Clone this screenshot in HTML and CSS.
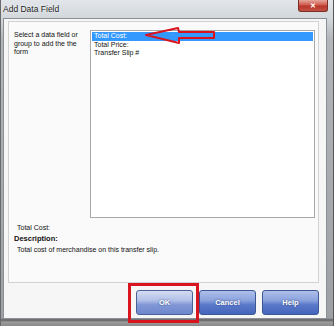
FILE: index.html
```html
<!DOCTYPE html>
<html>
<head>
<meta charset="utf-8">
<link rel="stylesheet" href="styles.css">
</head>
<body>
<div class="window">
  <div class="titlebar">
    <span class="title">Add Data Field</span>
    <span class="close">✕</span>
  </div>
  <div class="client">
    <div class="panel">
      <div class="top">
        <div class="prompt">Select a data field or<br>group to add the the<br>form</div>
        <div class="listbox">
          <div class="item selected">Total Cost:</div>
          <div class="item">Total Price:</div>
          <div class="item">Transfer Slip #</div>
          <svg class="arrow" width="90" height="24" viewBox="0 0 90 24">
            <polygon points="4,9 36,2 37,6 72,6 72,12 37,12 37,17" fill="none" stroke="#d8141e" stroke-width="2" stroke-linejoin="round"/>
          </svg>
        </div>
      </div>
      <div class="info">
        <div class="field">Total Cost:</div>
        <div class="desc-label">Description:</div>
        <div class="field">Total cost of merchandise on this transfer slip.</div>
      </div>
    </div>
    <div class="buttons">
      <button class="btn ok">OK<span class="highlight"></span></button>
      <button class="btn">Cancel</button>
      <button class="btn">Help</button>
    </div>
  </div>
</div>
</body>
</html>
```

FILE: styles.css
```css
html, body {
  margin: 0;
  padding: 0;
}
body {
  width: 334px;
  height: 326px;
  overflow: hidden;
  background: #7a7a7a;
  font-family: "Liberation Sans", Arial, sans-serif;
}
.window {
  box-sizing: border-box;
  width: 334px;
  height: 326px;
  display: flex;
  flex-direction: column;
  padding: 0 6px 0 2px;
  border-left: 1px solid #6a6a6a;
  border-right: 1px solid #555;
  background: linear-gradient(#e2e5e9 0px, #d3d8dc 18px, #b2b6ba 40px, #a6aaae 200px, #9da1a5 318px, #5e6062 320px, #9b9b9b 322px, #8a8a8a 326px);
}
.titlebar {
  height: 18px;
  display: flex;
  align-items: flex-start;
  justify-content: space-between;
}
.title {
  font-size: 8.5px;
  color: #1e1e1e;
  margin-top: 4px;
  text-shadow: 0 0 3px #ffffff;
}
.close {
  width: 30px;
  height: 12px;
  margin-right: -1px;
  box-sizing: border-box;
  border: 1px solid #7a2e26;
  border-top: none;
  border-radius: 0 0 3px 3px;
  background: linear-gradient(#e6a69c, #cf5a4c 45%, #b8352a 55%, #c45045);
  color: #fff;
  font-size: 7px;
  font-weight: bold;
  line-height: 11px;
  text-align: center;
}
.client {
  height: 301px;
  box-sizing: border-box;
  background: #f6f6f6;
  border: 1px solid #8c9094;
  padding: 2px 7px 3px 4px;
  display: flex;
  flex-direction: column;
}
.panel {
  height: 262px;
  box-sizing: border-box;
  border: 1px solid #d2d2d2;
  background: #fafafa;
  padding: 8px 3px 0 5px;
  display: flex;
  flex-direction: column;
}
.top {
  display: flex;
}
.prompt {
  width: 76px;
  flex: none;
  font-size: 7px;
  line-height: 8.5px;
  color: #111;
  padding-top: 1px;
}
.listbox {
  position: relative;
  flex: 1;
  height: 188px;
  box-sizing: border-box;
  border: 1px solid #a8a8a8;
  background: #fff;
  padding: 1px;
}
.item {
  font-size: 7px;
  line-height: 8.5px;
  height: 8.5px;
  padding-left: 2px;
  color: #111;
}
.item.selected {
  background: #3399ff;
  color: #fff;
}
.arrow {
  position: absolute;
  left: 51px;
  top: -5px;
  overflow: visible;
}
.info {
  margin-top: 4px;
  font-size: 7px;
  line-height: 11px;
  color: #111;
}
.field {
  padding-left: 3px;
}
.desc-label {
  font-weight: bold;
  font-size: 7.5px;
}
.buttons {
  margin-top: 7px;
  display: flex;
  justify-content: flex-end;
  gap: 6px;
}
.btn {
  position: relative;
  width: 57px;
  height: 25px;
  box-sizing: border-box;
  border: 1px solid #3b5796;
  border-radius: 3px;
  background: linear-gradient(#aebfea, #8ca3dd 40%, #5a79c9 60%, #4565bb);
  color: #fff;
  font-family: "Liberation Sans", Arial, sans-serif;
  font-weight: bold;
  font-size: 7.5px;
  text-shadow: 0 0 2px #2a3f7a;
  padding: 0;
}
.btn.ok {
  background: linear-gradient(#d4dcf2, #b3c1e8 40%, #8197d6 60%, #6e87cc);
  border-color: #4a6197;
}
.highlight {
  position: absolute;
  left: -9px;
  top: -8px;
  right: -7px;
  bottom: -9px;
  border: 3px solid #d8141e;
}
```
